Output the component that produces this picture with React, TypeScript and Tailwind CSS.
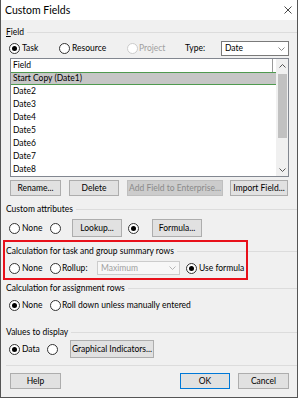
import type { ReactNode } from 'react';

function Radio({ checked = false, disabled = false }: { checked?: boolean; disabled?: boolean }) {
    return (
        <span
            className={`flex h-[11px] w-[11px] shrink-0 items-center justify-center rounded-full border bg-white ${
                disabled ? 'border-[#cccccc]' : 'border-[#333333]'
            }`}
        >
            {checked && <span className="h-[5px] w-[5px] rounded-full bg-black" />}
        </span>
    );
}

function Btn({
    children,
    w,
    h = 'h-[16px]',
    disabled = false,
    primary = false,
}: {
    children: ReactNode;
    w: string;
    h?: string;
    disabled?: boolean;
    primary?: boolean;
}) {
    return (
        <div
            className={`flex shrink-0 items-center justify-center border ${w} ${h} ${
                disabled
                    ? 'border-[#bfbfbf] bg-[#cccccc] text-[#8a8a8a]'
                    : primary
                      ? 'border-[#0078d7] bg-[#e1e1e1]'
                      : 'border-[#adadad] bg-[#e1e1e1]'
            }`}
        >
            {children}
        </div>
    );
}

function GroupLabel({ children, className = '' }: { children: ReactNode; className?: string }) {
    return (
        <div className={`flex h-[10px] items-center pl-[5px] ${className}`}>
            <span className="whitespace-nowrap leading-none">{children}</span>
            <div className="ml-[3px] h-px flex-1 bg-[#dcdcdc]" />
        </div>
    );
}

function Chevron({ color = '#555555' }: { color?: string }) {
    return (
        <svg width="7" height="4" viewBox="0 0 7 4" fill="none">
            <path d="M0.5 0.5L3.5 3.5L6.5 0.5" stroke={color} strokeWidth="1" />
        </svg>
    );
}

const rows = ['Date2', 'Date3', 'Date4', 'Date5', 'Date6', 'Date7', 'Date8'];

export default function App() {
    return (
        <div className="h-[400px] w-[299px] bg-white font-['Lato',sans-serif] text-[8.5px] text-black">
            <div className="flex h-[398px] w-[298px] flex-col border-x border-b border-[#555555]">
                {/* Title bar */}
                <div className="flex h-[20px] shrink-0 items-center justify-between bg-white pl-[4px] pr-[5px]">
                    <span className="text-[10.5px] leading-none">Custom Fields</span>
                    <svg width="8" height="8" viewBox="0 0 8 8">
                        <path d="M0.5 0.5L7.5 7.5M7.5 0.5L0.5 7.5" stroke="#333" strokeWidth="0.9" />
                    </svg>
                </div>

                {/* Body */}
                <div className="relative flex flex-1 flex-col bg-[#f0f0f0]">
                    <GroupLabel className="mt-[7px]">
                        <span className="underline decoration-[0.5px] underline-offset-1">F</span>ield
                    </GroupLabel>

                    <div className="mt-[4px] flex h-[15px] items-center pl-[8px] pr-[8px]">
                        <Radio checked />
                        <span className="ml-[2px] w-[37px]">Task</span>
                        <Radio />
                        <span className="ml-[2px] w-[55px]">Resource</span>
                        <Radio disabled />
                        <span className="ml-[1px] w-[46px] text-[#a0a0a0]">Project</span>
                        <span>Type:</span>
                        <div className="ml-auto flex h-[15px] w-[68px] items-center justify-between border border-[#7a7a7a] bg-white pl-[3px] pr-[3px]">
                            <span>Date</span>
                            <Chevron color="#888" />
                        </div>
                    </div>

                    {/* Field list */}
                    <div className="ml-[9px] mr-[8px] mt-[2px] flex h-[119px] border border-[#828790] bg-white">
                        <div className="flex flex-1 flex-col">
                            <div className="flex h-[13px] items-center">
                                <span className="flex-1 pl-[2px]">Field</span>
                                <div className="mr-[3px] h-full w-px bg-[#9a9a9a]" />
                            </div>
                            <div className="flex h-[13px] items-center border-y border-[#4f9a4f] bg-[#c6c6c6] pl-[2px]">
                                Start Copy (Date1)
                            </div>
                            {rows.map((r) => (
                                <div key={r} className="flex h-[13px] items-center pl-[2px]">
                                    {r}
                                </div>
                            ))}
                        </div>
                        <div className="flex w-[12px] flex-col items-center bg-[#f0f0f0]">
                            <div className="flex h-[13px] items-center">
                                <svg width="7" height="4" viewBox="0 0 7 4" fill="none">
                                    <path d="M0.5 3.5L3.5 0.5L6.5 3.5" stroke="#555" strokeWidth="1" />
                                </svg>
                            </div>
                            <div className="mt-[2px] h-[64px] w-[9px] bg-[#c1c1c1]" />
                            <div className="mt-auto flex h-[13px] items-center">
                                <Chevron />
                            </div>
                        </div>
                    </div>

                    <div className="mt-[3px] flex h-[16px] items-center gap-[8px] pl-[9px]">
                        <Btn w="w-[51px]">Rename...</Btn>
                        <Btn w="w-[50px]">Delete</Btn>
                        <Btn w="w-[96px]" disabled>
                            Add Field to Enterprise...
                        </Btn>
                        <span className="-ml-px">
                            <Btn w="w-[58px]">Import Field...</Btn>
                        </span>
                    </div>

                    {/* Custom attributes */}
                    <GroupLabel className="mt-[8px]">Custom attributes</GroupLabel>
                    <div className="mt-[5px] flex h-[18px] items-center pl-[8px]">
                        <Radio />
                        <span className="ml-[2px] w-[28px]">None</span>
                        <Radio />
                        <span className="ml-[11px]">
                            <Btn w="w-[50px]" h="h-[18px]">Lookup...</Btn>
                        </span>
                        <span className="ml-[6px]"><Radio checked /></span>
                        <span className="ml-[13px]">
                            <Btn w="w-[50px]" h="h-[18px]">Formula...</Btn>
                        </span>
                    </div>

                    {/* Task and group summary rows */}
                    <GroupLabel className="mt-[9px]">Calculation for task and group summary rows</GroupLabel>
                    <div className="mt-[5px] flex h-[14px] items-center pl-[8px]">
                        <Radio />
                        <span className="ml-[2px] w-[28px]">None</span>
                        <Radio />
                        <span className="ml-[1px] w-[24px]">Rollup:</span>
                        <div className="ml-[11px] flex h-[14px] w-[83px] items-center justify-between border border-[#cccccc] bg-[#f7f7f7] pl-[3px] pr-[3px] text-[#a0a0a0]">
                            <span>Maximum</span>
                            <Chevron color="#b5b5b5" />
                        </div>
                        <span className="ml-[6px]"><Radio checked /></span>
                        <span className="ml-[2px]">Use formula</span>
                    </div>

                    {/* Assignment rows */}
                    <GroupLabel className="mt-[8px]">Calculation for assignment rows</GroupLabel>
                    <div className="mt-[5px] flex h-[14px] items-center pl-[8px]">
                        <Radio checked />
                        <span className="ml-[2px] w-[28px]">None</span>
                        <Radio />
                        <span className="ml-[1px]">Roll down unless manually entered</span>
                    </div>

                    {/* Values to display */}
                    <GroupLabel className="mt-[15px]">Values to display</GroupLabel>
                    <div className="mt-[3px] flex h-[18px] items-center pl-[8px]">
                        <Radio checked />
                        <span className="ml-[2px] w-[25px]">Data</span>
                        <Radio />
                        <span className="ml-[12px]">
                            <Btn w="w-[84px]" h="h-[18px]">Graphical Indicators...</Btn>
                        </span>
                    </div>

                    <div className="ml-[5px] mt-[7px] h-px bg-[#dcdcdc]" />

                    <div className="mt-[7px] flex h-[16px] items-center pl-[9px] pr-[8px]">
                        <Btn w="w-[51px]">Help</Btn>
                        <span className="ml-auto">
                            <Btn w="w-[50px]" primary>OK</Btn>
                        </span>
                        <span className="ml-[8px]">
                            <Btn w="w-[51px]">Cancel</Btn>
                        </span>
                    </div>

                    {/* Red highlight annotation */}
                    <div className="pointer-events-none absolute left-[2px] top-[220px] h-[40px] w-[245px] border-2 border-[#e8101a]" />
                </div>
            </div>
        </div>
    );
}
